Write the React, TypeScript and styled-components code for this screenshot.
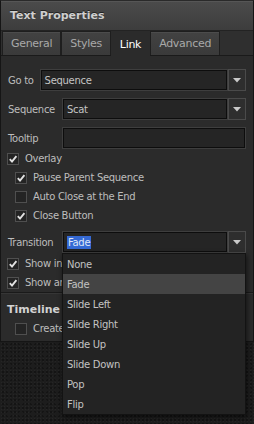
import React from 'react'
import styled, { createGlobalStyle } from 'styled-components'

const GlobalStyle = createGlobalStyle`
   html, body {
      margin: 0;
      padding: 0;
   }
   body {
      width: 254px;
      height: 424px;
      overflow: hidden;
      background-color: #1d1d1d;
      background-image:
         radial-gradient(rgba(255, 255, 255, 0.035) 1px, transparent 1px),
         radial-gradient(rgba(0, 0, 0, 0.3) 1px, transparent 1px);
      background-size: 3px 3px, 4px 4px;
      background-position: 0 0, 1px 2px;
      font-family: 'DejaVu Sans', Verdana, sans-serif;
      font-size: 10px;
      letter-spacing: -0.3px;
      color: #bdbdbd;
   }
`

const transitions = ['None', 'Fade', 'Slide Left', 'Slide Right', 'Slide Up', 'Slide Down', 'Pop', 'Flip']

const Check = ({ checked }: { checked?: boolean }) => (
   <Box>
      {checked && (
         <svg width="10" height="10" viewBox="0 0 10 10">
            <path d="M1.8 5.2 L4 7.6 L8.4 2.2" fill="none" stroke="#e2e2e2" strokeWidth="1.9" />
         </svg>
      )}
   </Box>
)

const Arrow = () => (
   <ArrowBox>
      <svg width="8" height="5" viewBox="0 0 8 5">
         <polygon points="0,0 8,0 4,4.5" fill="#c9c9c9" />
      </svg>
   </ArrowBox>
)

const App = () => {
   return (
      <>
         <GlobalStyle />
         <Panel>
            <TitleBar>Text Properties</TitleBar>
            <TabBar>
               <Tab>General</Tab>
               <Tab>Styles</Tab>
               <Tab active>Link</Tab>
               <Tab>Advanced</Tab>
            </TabBar>
            <Body>
               <Row>
                  <Label>Go to</Label>
                  <Combo>
                     <Field>Sequence</Field>
                     <Arrow />
                  </Combo>
               </Row>
               <Row>
                  <Label width={54}>Sequence</Label>
                  <Combo>
                     <Field>Scat</Field>
                     <Arrow />
                  </Combo>
               </Row>
               <Row>
                  <Label width={54}>Tooltip</Label>
                  <Field />
               </Row>
               <CheckList offset={-7}>
                  <CheckRow>
                     <Check checked />
                     Overlay
                  </CheckRow>
                  <CheckRow indent>
                     <Check checked />
                     Pause Parent Sequence
                  </CheckRow>
                  <CheckRow indent>
                     <Check />
                     Auto Close at the End
                  </CheckRow>
                  <CheckRow indent>
                     <Check checked />
                     Close Button
                  </CheckRow>
               </CheckList>
               <Row spaced>
                  <Label width={54}>Transition</Label>
                  <Combo>
                     <Field>
                        <Selected>Fade</Selected>
                     </Field>
                     <Arrow />
                     <Menu>
                        {transitions.map(t => (
                           <MenuItem key={t} hover={t === 'Fade'}>
                              {t}
                           </MenuItem>
                        ))}
                     </Menu>
                  </Combo>
               </Row>
               <CheckList offset={-6}>
                  <CheckRow>
                     <Check checked />
                     Show in Timeline
                  </CheckRow>
                  <CheckRow>
                     <Check checked />
                     Show arrow
                  </CheckRow>
               </CheckList>
            </Body>
            <Section>
               <Heading>Timeline Actions</Heading>
               <CheckRow indent>
                  <Check />
                  Create Actions
               </CheckRow>
            </Section>
         </Panel>
      </>
   )
}

const Panel = styled.section`
   width: 254px;
   box-sizing: border-box;
   border: 1px solid #151515;
   border-top-color: #2a2a2a;
   background-color: #2b2b2b;
`

const TitleBar = styled.header`
   height: 29px;
   padding-left: 9px;
   display: flex;
   align-items: center;
   background: linear-gradient(#4b4b4b, #3d3d3d);
   border-bottom: 1px solid #232323;
   box-shadow: inset 0 1px 0 #565656;
   font-size: 11px;
   font-weight: bold;
   letter-spacing: 0;
   color: #cfcfcf;
   text-shadow: 0 -1px 0 #222;
`

const TabBar = styled.nav`
   display: flex;
   height: 24px;
   padding-left: 1px;
   background-color: #2f2f2f;
   border-bottom: 1px solid #1a1a1a;
`

const Tab = styled.div<{ active?: boolean }>`
   display: flex;
   align-items: center;
   padding: 0 8px;
   margin-bottom: ${p => (p.active ? '-1px' : '0')};
   font-size: 11px;
   color: ${p => (p.active ? '#ffffff' : '#a9a9a9')};
   background: ${p => (p.active ? '#2b2b2b' : 'linear-gradient(#424242, #3a3a3a)')};
   border: 1px solid ${p => (p.active ? 'transparent' : '#1e1e1e')};
   border-bottom: none;
   box-shadow: ${p => (p.active ? 'none' : 'inset 0 1px 0 #4c4c4c')};
`

const Body = styled.div`
   display: flex;
   flex-direction: column;
   padding: 13px 7px 0 6px;
   border-bottom: 1px solid #1a1a1a;
`

const Row = styled.div<{ spaced?: boolean }>`
   display: flex;
   align-items: center;
   height: 22px;
   margin-top: ${p => (p.spaced ? '6px' : '0')};
   margin-bottom: 7px;
   padding-left: 1px;
`

const Label = styled.span<{ width?: number }>`
   flex: none;
   width: ${p => (p.width ? `${p.width}px` : 'auto')};
   margin-right: ${p => (p.width ? '0' : '6px')};
   white-space: nowrap;
`

const Combo = styled.div`
   position: relative;
   flex: 1;
   display: flex;
   height: 22px;
`

const Field = styled.div`
   flex: 1;
   display: flex;
   align-items: center;
   height: 20px;
   padding-left: 3px;
   box-sizing: border-box;
   margin: 1px;
   background-color: #252525;
   border: 1px solid #0d0d0d;
   box-shadow: 0 0 0 1px #3e3e3e;
   color: #c4c4c4;
`

const Selected = styled.span`
   padding: 1px 1px;
   background-color: #3569d3;
   color: #dfe7f7;
`

const ArrowBox = styled.div`
   flex: none;
   width: 18px;
   height: 22px;
   box-sizing: border-box;
   display: flex;
   align-items: center;
   justify-content: center;
   background-color: #2e2e2e;
   border: 1px solid #4a4a4a;
`

const Menu = styled.ul`
   position: absolute;
   top: 22px;
   left: 0;
   right: 0;
   margin: 0;
   padding: 0;
   list-style: none;
   background-color: #232323;
   border: 1px solid #131313;
   box-shadow: 1px 2px 5px rgba(0, 0, 0, 0.6);
   z-index: 2;
`

const MenuItem = styled.li<{ hover?: boolean }>`
   height: 20px;
   display: flex;
   align-items: center;
   padding-left: 4px;
   color: #c2c2c2;
   background-color: ${p => (p.hover ? '#444444' : 'transparent')};
`

const CheckList = styled.div<{ offset: number }>`
   display: flex;
   flex-direction: column;
   margin-top: ${p => p.offset}px;
`

const CheckRow = styled.label<{ indent?: boolean }>`
   display: flex;
   align-items: center;
   height: 19px;
   padding-left: ${p => (p.indent ? '8px' : '0')};
   white-space: nowrap;
`

const Box = styled.span`
   flex: none;
   width: 12px;
   height: 12px;
   margin-right: 6px;
   box-sizing: border-box;
   display: flex;
   align-items: center;
   justify-content: center;
   background-color: #242424;
   border: 1px solid #4f4f4f;
`

const Section = styled.div`
   display: flex;
   flex-direction: column;
   gap: 2px;
   padding: 7px 7px 3px 6px;
   border-top: 1px solid #363636;
`

const Heading = styled.h3`
   margin: 0;
   height: 16px;
   display: flex;
   align-items: center;
   font-size: 11px;
   font-weight: bold;
   letter-spacing: 0;
   color: #d2d2d2;
`

export default App
